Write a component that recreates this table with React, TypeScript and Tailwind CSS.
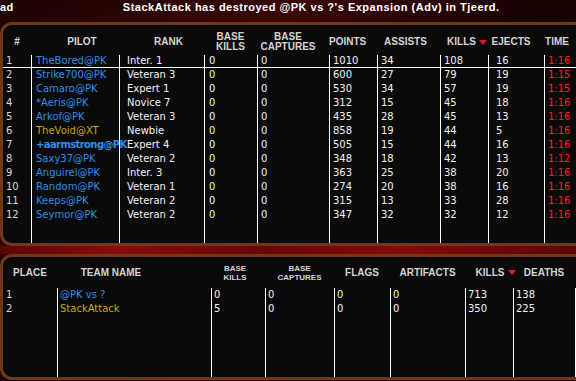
import React from 'react'

type PilotRow = {
  n: number
  pilot: string
  rank: string
  bk: number
  bc: number
  points: number
  assists: number
  kills: number
  ejects: number
  time: string
  gold?: boolean
  bold?: boolean
}

const pilots: PilotRow[] = [
  { n: 1, pilot: 'TheBored@PK', rank: 'Inter. 1', bk: 0, bc: 0, points: 1010, assists: 34, kills: 108, ejects: 16, time: '1:16' },
  { n: 2, pilot: 'Strike700@PK', rank: 'Veteran 3', bk: 0, bc: 0, points: 600, assists: 27, kills: 79, ejects: 19, time: '1:15' },
  { n: 3, pilot: 'Camaro@PK', rank: 'Expert 1', bk: 0, bc: 0, points: 530, assists: 34, kills: 57, ejects: 19, time: '1:15' },
  { n: 4, pilot: '*Aeris@PK', rank: 'Novice 7', bk: 0, bc: 0, points: 312, assists: 15, kills: 45, ejects: 18, time: '1:16' },
  { n: 5, pilot: 'Arkof@PK', rank: 'Veteran 3', bk: 0, bc: 0, points: 435, assists: 28, kills: 45, ejects: 13, time: '1:16' },
  { n: 6, pilot: 'TheVoid@XT', rank: 'Newbie', bk: 0, bc: 0, points: 858, assists: 19, kills: 44, ejects: 5, time: '1:16', gold: true },
  { n: 7, pilot: '+aarmstrong@PK', rank: 'Expert 4', bk: 0, bc: 0, points: 505, assists: 15, kills: 44, ejects: 16, time: '1:16', bold: true },
  { n: 8, pilot: 'Saxy37@PK', rank: 'Veteran 2', bk: 0, bc: 0, points: 348, assists: 18, kills: 42, ejects: 13, time: '1:12' },
  { n: 9, pilot: 'Anguirel@PK', rank: 'Inter. 3', bk: 0, bc: 0, points: 363, assists: 25, kills: 38, ejects: 20, time: '1:16' },
  { n: 10, pilot: 'Random@PK', rank: 'Veteran 1', bk: 0, bc: 0, points: 274, assists: 20, kills: 38, ejects: 16, time: '1:16' },
  { n: 11, pilot: 'Keeps@PK', rank: 'Veteran 2', bk: 0, bc: 0, points: 315, assists: 13, kills: 33, ejects: 28, time: '1:16' },
  { n: 12, pilot: 'Seymor@PK', rank: 'Veteran 2', bk: 0, bc: 0, points: 347, assists: 32, kills: 32, ejects: 12, time: '1:16' },
]

const teams = [
  { place: 1, name: '@PK vs ?', bk: 0, bc: 0, flags: 0, artifacts: 0, kills: 713, deaths: 138, gold: false },
  { place: 2, name: 'StackAttack', bk: 5, bc: 0, flags: 0, artifacts: 0, kills: 350, deaths: 225, gold: true },
]

function SortArrow() {
  return (
    <svg width="8" height="5" viewBox="0 0 8 5" className="shrink-0">
      <path d="M0 0h8L4 5z" fill="#e3162b" />
    </svg>
  )
}

export default function App() {
  return (
    <div className="w-[576px] h-[381px] overflow-hidden flex flex-col bg-[linear-gradient(150deg,#1c0303_0%,#3a0707_25%,#170202_45%,#2e0505_70%,#1a0303_100%)] font-['DejaVu_Sans',sans-serif]">

      {/* event ticker */}
      <div className="h-[22px] shrink-0 flex items-start pt-[1px] text-white font-bold text-[11px] leading-[13px] tracking-[0.5px] font-['Liberation_Sans',Arial,sans-serif] whitespace-nowrap">
        <span>ad</span>
        <span className="ml-[109px]">StackAttack has destroyed @PK vs ?'s Expansion (Adv) in Tjeerd.</span>
      </div>

      {/* PILOTS */}
      <section className="h-[224px] shrink-0 rounded-l-[12px] border-[3px] border-r-0 border-[#6e381b] bg-[#0a0a0a] flex flex-col overflow-hidden">
        <header className="h-[30px] shrink-0 pt-[4px] grid grid-cols-[28px_88px_85px_53px_72px_48px_63px_48px_56px_1fr] items-center text-[10px] leading-[10px] font-bold text-[#d4d4d4] font-['Liberation_Sans',Arial,sans-serif] text-center">
          <span>#</span>
          <span className="pl-[14px]">PILOT</span>
          <span className="pl-[14px]">RANK</span>
          <span>BASE<br />KILLS</span>
          <span className="pr-[10px]">BASE<br />CAPTURES</span>
          <span className="pr-[14px]">POINTS</span>
          <span className="pr-[6px]">ASSISTS</span>
          <span className="flex items-center justify-center gap-[3px] pl-[6px]">KILLS<SortArrow /></span>
          <span className="pr-[10px]">EJECTS</span>
          <span className="pr-[6px]">TIME</span>
        </header>

        <div className="flex-1 grid grid-cols-[28px_88px_85px_53px_72px_48px_63px_48px_56px_1fr] grid-rows-[13px_repeat(11,14px)_1fr] text-[10px] leading-[12px] text-[#f2f2f2] whitespace-nowrap">
          {pilots.map((p, i) => {
            const line = i === 0 ? 'border-b border-white' : ''
            const cell = `flex items-center border-l border-white ${line}`
            return (
              <React.Fragment key={p.n}>
                <div className={`flex items-center pl-[3px] text-[#d8d8d8] ${line}`}>{p.n}</div>
                <div className={`${cell} pl-[4px] ${p.gold ? 'text-[#c9a50f]' : 'text-[#2a8fe6]'} ${p.bold ? 'font-bold tracking-[-0.6px]' : ''}`}>{p.pilot}</div>
                <div className={`${cell} pl-[7px]`}>{p.rank}</div>
                <div className={`${cell} pl-[4px]`}>{p.bk}</div>
                <div className={`${cell} pl-[3px]`}>{p.bc}</div>
                <div className={`${cell} pl-[3px]`}>{p.points}</div>
                <div className={`${cell} pl-[3px]`}>{p.assists}</div>
                <div className={`${cell} pl-[3px]`}>{p.kills}</div>
                <div className={`${cell} pl-[7px]`}>{p.ejects}</div>
                <div className={`${cell} pl-[3px] text-[#ff1e1e]`}>{p.time}</div>
              </React.Fragment>
            )
          })}
          {/* filler so the column rules run to the bottom */}
          <div />
          {Array.from({ length: 9 }).map((_, i) => (
            <div key={i} className="border-l border-white" />
          ))}
        </div>
      </section>

      {/* red band between panels */}
      <div className="h-[8px] shrink-0 bg-[linear-gradient(90deg,#5c0505_0%,#8a0b0b_20%,#6a0606_45%,#860a0a_70%,#5a0404_100%)]" />

      {/* TEAMS */}
      <section className="h-[126px] shrink-0 rounded-l-[12px] border-[3px] border-r-0 border-[#6e381b] bg-[#0a0a0a] flex flex-col overflow-hidden">
        <header className="h-[31px] shrink-0 grid grid-cols-[54px_154px_54px_69px_56px_75px_48px_62px_1fr] items-center text-[10px] leading-[10px] font-bold text-[#d4d4d4] font-['Liberation_Sans',Arial,sans-serif] text-center">
          <span>PLACE</span>
          <span className="pr-[46px]">TEAM NAME</span>
          <span className="text-[8px] leading-[9px] pr-[6px]">BASE<br />KILLS</span>
          <span className="text-[8px] leading-[9px]">BASE<br />CAPTURES</span>
          <span>FLAGS</span>
          <span>ARTIFACTS</span>
          <span className="flex items-center justify-center gap-[4px] pl-[14px]">KILLS<SortArrow /></span>
          <span>DEATHS</span>
          <span />
        </header>

        <div className="flex-1 grid grid-cols-[54px_154px_54px_69px_56px_75px_48px_62px_1fr] grid-rows-[14px_14px_1fr] text-[10px] leading-[12px] text-[#f2f2f2] whitespace-nowrap">
          {teams.map((t) => {
            const cell = 'flex items-center border-l border-white pl-[2px]'
            return (
              <React.Fragment key={t.place}>
                <div className="flex items-center pl-[3px] text-[#d8d8d8]">{t.place}</div>
                <div className={`${cell} ${t.gold ? 'text-[#c9a80f]' : 'text-[#2a8fe6]'}`}>{t.name}</div>
                <div className={cell}>{t.bk}</div>
                <div className={cell}>{t.bc}</div>
                <div className={cell}>{t.flags}</div>
                <div className={cell}>{t.artifacts}</div>
                <div className={cell}>{t.kills}</div>
                <div className={cell}>{t.deaths}</div>
                <div className="border-l border-white" />
              </React.Fragment>
            )
          })}
          <div />
          {Array.from({ length: 8 }).map((_, i) => (
            <div key={i} className="border-l border-white" />
          ))}
        </div>
      </section>
    </div>
  )
}
